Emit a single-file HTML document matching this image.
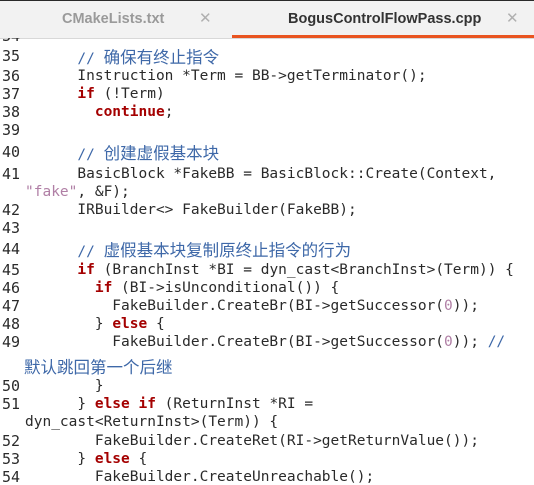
<!DOCTYPE html>
<html><head><meta charset="utf-8"><style>
body{margin:0;width:534px;height:485px;overflow:hidden;background:#fff;position:relative;font-family:"DejaVu Sans Mono","Noto Sans CJK SC",monospace;font-size:14.5px;color:#2a2a2a}
.tabs{position:absolute;left:0;top:0;width:534px;height:37px;background:#f2f2f2;border-top:1px solid #2a2a2a;border-bottom:1px solid #d8d8d8;font-family:"Liberation Sans",sans-serif;font-weight:bold;font-size:14.5px}
.t{position:absolute;top:10px}
.x{position:absolute;top:8px;color:#b0b0b0;font-weight:normal;font-size:15px}
.ul{position:absolute;left:232px;top:34px;width:302px;height:3px;background:#e95420}
.code{position:absolute;left:0;top:38px;width:534px;height:447px;overflow:hidden}
.l{position:absolute;left:0;height:18px;line-height:18px;white-space:pre}
.n{position:absolute;left:2px;font-size:15px}
.c{position:absolute;left:25px}
.cm{color:#3e68a8}
.z{font-family:"Noto Sans CJK SC",sans-serif;font-size:16.5px}
.k{color:#a40000;font-weight:bold}
.s{color:#b07fa5}
</style></head><body>
<div class="tabs">
<span class="t" style="left:62px;color:#9a9a9a">CMakeLists.txt</span><span class="x" style="left:199px">✕</span>
<span class="t" style="left:288px;color:#333">BogusControlFlowPass.cpp</span><span class="x" style="left:506px">✕</span>
<div class="ul"></div>
</div>
<div class="code">
<div class="l" style="top:-11px"><span class="n">34</span></div>
<div class="l" style="top:9px"><span class="n">35</span><span class="c">      <span class="cm">// <span class="z">确保有终止指令</span></span></span></div>
<div class="l" style="top:29px"><span class="n">36</span><span class="c">      Instruction *Term = BB-&gt;getTerminator();</span></div>
<div class="l" style="top:47px"><span class="n">37</span><span class="c">      <span class="k">if</span> (!Term)</span></div>
<div class="l" style="top:65px"><span class="n">38</span><span class="c">        <span class="k">continue</span>;</span></div>
<div class="l" style="top:83px"><span class="n">39</span></div>
<div class="l" style="top:105px"><span class="n">40</span><span class="c">      <span class="cm">// <span class="z">创建虚假基本块</span></span></span></div>
<div class="l" style="top:127px"><span class="n">41</span><span class="c">      BasicBlock *FakeBB = BasicBlock::Create(Context,</span></div>
<div class="l" style="top:145px"><span class="c"><span class="s">"fake"</span>, &amp;F);</span></div>
<div class="l" style="top:163px"><span class="n">42</span><span class="c">      IRBuilder&lt;&gt; FakeBuilder(FakeBB);</span></div>
<div class="l" style="top:181px"><span class="n">43</span></div>
<div class="l" style="top:202px"><span class="n">44</span><span class="c">      <span class="cm">// <span class="z">虚假基本块复制原终止指令的行为</span></span></span></div>
<div class="l" style="top:223px"><span class="n">45</span><span class="c">      <span class="k">if</span> (BranchInst *BI = dyn_cast&lt;BranchInst&gt;(Term)) {</span></div>
<div class="l" style="top:241px"><span class="n">46</span><span class="c">        <span class="k">if</span> (BI-&gt;isUnconditional()) {</span></div>
<div class="l" style="top:259px"><span class="n">47</span><span class="c">          FakeBuilder.CreateBr(BI-&gt;getSuccessor(<span class="s">0</span>));</span></div>
<div class="l" style="top:277px"><span class="n">48</span><span class="c">        } <span class="k">else</span> {</span></div>
<div class="l" style="top:295px"><span class="n">49</span><span class="c">          FakeBuilder.CreateBr(BI-&gt;getSuccessor(<span class="s">0</span>)); <span class="cm">//</span></span></div>
<div class="l" style="top:319px"><span class="c" style="left:24px"><span class="cm z">默认跳回第一个后继</span></span></div>
<div class="l" style="top:339px"><span class="n">50</span><span class="c">        }</span></div>
<div class="l" style="top:357px"><span class="n">51</span><span class="c">      } <span class="k">else if</span> (ReturnInst *RI =</span></div>
<div class="l" style="top:375px"><span class="c">dyn_cast&lt;ReturnInst&gt;(Term)) {</span></div>
<div class="l" style="top:394px"><span class="n">52</span><span class="c">        FakeBuilder.CreateRet(RI-&gt;getReturnValue());</span></div>
<div class="l" style="top:412px"><span class="n">53</span><span class="c">      } <span class="k">else</span> {</span></div>
<div class="l" style="top:430px"><span class="n">54</span><span class="c">        FakeBuilder.CreateUnreachable();</span></div>
</div>
</body></html>
